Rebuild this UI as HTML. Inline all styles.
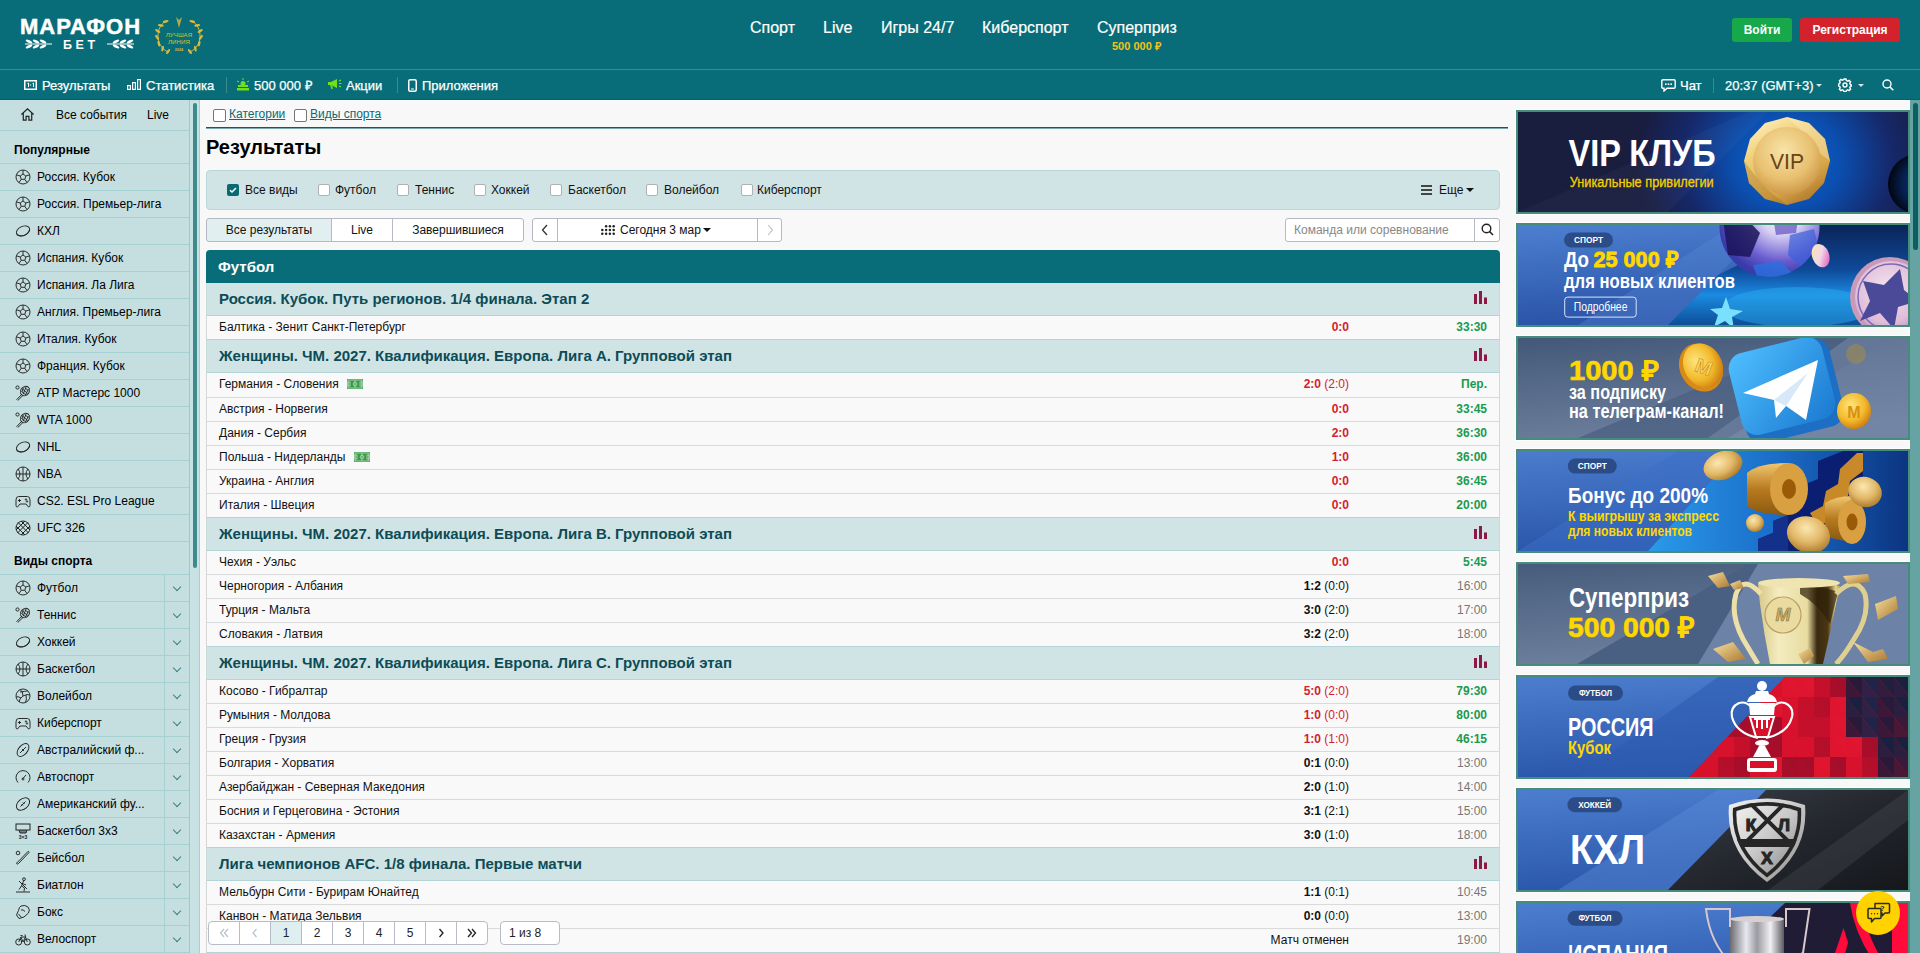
<!DOCTYPE html>
<html><head><meta charset="utf-8">
<style>
*{box-sizing:border-box}
html,body{margin:0;padding:0;width:1920px;height:953px;overflow:hidden;background:#f8f8f8;font-family:"Liberation Sans",sans-serif;font-size:12px;color:#000}
.abs{position:absolute}
#hdr{position:absolute;left:0;top:0;width:1920px;height:100px;background:#086d78}
#hdr .line{position:absolute;left:0;top:69px;width:1920px;height:1px;background:#3b8a8f}
.nav{position:absolute;top:19px;font-size:16px;color:#fff;line-height:18px;white-space:nowrap;-webkit-text-stroke:0.2px #fff}
.sub{position:absolute;top:78px;font-size:13px;color:#fff;line-height:15px;white-space:nowrap;-webkit-text-stroke:0.25px #fff}
.btn{position:absolute;top:18px;height:24px;border-radius:3px;color:#fff;font-weight:bold;font-size:12px;line-height:24px;text-align:center}
#side{position:absolute;left:0;top:100px;width:190px;height:853px;background:#c5dfe0;border-right:1px solid #9ccacc}
#sscroll{position:absolute;left:190px;top:100px;width:10px;height:853px;background:#c8e1e2;border-right:1px solid #a6d1d3}
#sscroll div{position:absolute;left:3px;top:3px;width:4px;height:465px;border-radius:3px;background:#3e8a8c}
.srow{position:absolute;left:0;width:189px;height:27px;border-bottom:1px solid #a6d1d3;white-space:nowrap}
.srow span{position:absolute;left:37px;top:6px;line-height:14px}
.srow svg{position:absolute;left:15px;top:5px}
.shead{position:absolute;left:0;width:189px;height:33px;border-bottom:1px solid #a6d1d3;font-weight:bold}
.shead span{position:absolute;left:14px;top:12px;line-height:14px}
.chev{position:absolute;left:164px;top:0;width:25px;height:26px;border-left:1px solid #a6d1d3}
.chev:after{content:"";position:absolute;left:9px;top:9px;width:5px;height:5px;border-right:1px solid #3c7f86;border-bottom:1px solid #3c7f86;transform:rotate(45deg)}
#main{position:absolute;left:200px;top:100px;width:1308px;height:853px;background:#f8f8f8}
#right{position:absolute;left:1508px;top:100px;width:402px;height:853px;background:#f8f8f8}
#rscroll{position:absolute;left:1910px;top:100px;width:10px;height:853px;background:#66a3a3}
#rscroll div{position:absolute;left:3px;top:3px;width:5px;height:147px;border-radius:3px;background:#0b5e62}

.cb{position:absolute;width:13px;height:13px;border:1px solid #767676;border-radius:2px;background:#fff}
.cbs{position:absolute;width:12px;height:12px;border:1px solid #b0b0b0;border-radius:2px;background:#fff}
.lnk{position:absolute;top:7px;color:#0b6a74;text-decoration:underline;line-height:14px;white-space:nowrap}
.ftxt{position:absolute;top:183px;line-height:14px;white-space:nowrap;color:#111}
.tab{position:absolute;top:118px;height:24px;line-height:22px;text-align:center;border:1px solid #b5b9c4;background:#fff;color:#111}
.cat{position:absolute;left:6px;width:1294px;height:33px;background:#d0e4e5;border-bottom:1px solid #b3d5d7;border-left:1px solid #c8dcdc;border-right:1px solid #c8dcdc}
.cat span{position:absolute;left:12px;top:7px;font-size:15px;font-weight:bold;color:#0d4c56;line-height:17px;white-space:nowrap}
.cat i{position:absolute;left:1267px;top:8px;width:13px;height:13px}
.row{position:absolute;left:6px;width:1294px;height:24px;background:#f9f9f9;border-bottom:1px solid #dadada;border-left:1px solid #d6d6d6;border-right:1px solid #d6d6d6;white-space:nowrap}
.row .n{position:absolute;left:12px;top:4px;line-height:14px;color:#111}
.row .s{position:absolute;right:150px;top:4px;line-height:14px;color:#111}
.row .t{position:absolute;right:12px;top:4px;line-height:14px;color:#777}
.row .s b{font-weight:bold}
.row .s.red{color:#d1232e}
.row .t.g{color:#1a9a4e;font-weight:bold}
.pi{position:absolute;left:1440px}
.pg{position:absolute;top:821px;height:24px;width:32px;border:1px solid #b7bcc8;background:#fff;text-align:center;line-height:22px;color:#222;font-size:12px}
</style></head><body>
<div id="hdr"><div class="line"></div>
<div class="abs" style="left:20px;top:15px;font-size:22px;font-weight:bold;color:#fff;letter-spacing:1px;line-height:24px;-webkit-text-stroke:0.5px #fff">МАРАФОН</div>
<div class="abs" style="left:63px;top:38px;font-size:12.5px;font-weight:bold;color:#fff;letter-spacing:3.6px;line-height:14px">БЕТ</div>
<svg class="abs" style="left:24px;top:38px" width="30" height="12" viewBox="0 0 30 12"><path d="M1 6 H28" stroke="#fff" stroke-width="1" fill="none"/><g fill="#fff"><ellipse cx="5" cy="3.5" rx="3.5" ry="1.3" transform="rotate(25 5 3.5)"/><ellipse cx="5" cy="8.5" rx="3.5" ry="1.3" transform="rotate(-25 5 8.5)"/><ellipse cx="12" cy="3.5" rx="3.5" ry="1.3" transform="rotate(25 12 3.5)"/><ellipse cx="12" cy="8.5" rx="3.5" ry="1.3" transform="rotate(-25 12 8.5)"/><ellipse cx="19" cy="3.5" rx="3.5" ry="1.3" transform="rotate(25 19 3.5)"/><ellipse cx="19" cy="8.5" rx="3.5" ry="1.3" transform="rotate(-25 19 8.5)"/></g></svg>
<svg class="abs" style="left:105px;top:38px" width="30" height="12" viewBox="0 0 30 12"><path d="M2 6 H29" stroke="#fff" stroke-width="1" fill="none"/><g fill="#fff"><ellipse cx="25" cy="3.5" rx="3.5" ry="1.3" transform="rotate(-25 25 3.5)"/><ellipse cx="25" cy="8.5" rx="3.5" ry="1.3" transform="rotate(25 25 8.5)"/><ellipse cx="18" cy="3.5" rx="3.5" ry="1.3" transform="rotate(-25 18 3.5)"/><ellipse cx="18" cy="8.5" rx="3.5" ry="1.3" transform="rotate(25 18 8.5)"/><ellipse cx="11" cy="3.5" rx="3.5" ry="1.3" transform="rotate(-25 11 3.5)"/><ellipse cx="11" cy="8.5" rx="3.5" ry="1.3" transform="rotate(25 11 8.5)"/></g></svg>
<svg class="abs" style="left:154px;top:15px" width="50" height="40" viewBox="0 0 50 40">
<g fill="none" stroke="#d9bb3a" stroke-width="1"><path d="M12 6 C1 12 1 31 14 37"/><path d="M38 6 C49 12 49 31 36 37"/></g>
<g fill="#d9bb3a"><ellipse cx="11.7" cy="6.5" rx="3" ry="1.2" transform="rotate(-15 11.7 6.5)"/><ellipse cx="38.3" cy="6.5" rx="3" ry="1.2" transform="rotate(15 38.3 6.5)"/><ellipse cx="6.8" cy="10.4" rx="3" ry="1.2" transform="rotate(8 6.8 10.4)"/><ellipse cx="43.2" cy="10.4" rx="3" ry="1.2" transform="rotate(-8 43.2 10.4)"/><ellipse cx="3.8" cy="16.0" rx="3" ry="1.2" transform="rotate(32 3.8 16.0)"/><ellipse cx="46.2" cy="16.0" rx="3" ry="1.2" transform="rotate(-32 46.2 16.0)"/><ellipse cx="3.1" cy="22.4" rx="3" ry="1.2" transform="rotate(55 3.1 22.4)"/><ellipse cx="46.9" cy="22.4" rx="3" ry="1.2" transform="rotate(-55 46.9 22.4)"/><ellipse cx="4.8" cy="28.6" rx="3" ry="1.2" transform="rotate(78 4.8 28.6)"/><ellipse cx="45.2" cy="28.6" rx="3" ry="1.2" transform="rotate(-78 45.2 28.6)"/><ellipse cx="8.7" cy="33.6" rx="3" ry="1.2" transform="rotate(102 8.7 33.6)"/><ellipse cx="41.3" cy="33.6" rx="3" ry="1.2" transform="rotate(-102 41.3 33.6)"/><ellipse cx="14.1" cy="36.5" rx="3" ry="1.2" transform="rotate(125 14.1 36.5)"/><ellipse cx="35.9" cy="36.5" rx="3" ry="1.2" transform="rotate(-125 35.9 36.5)"/><path d="M25 13 L22 2 L25 5 L28 2 Z" opacity="0.8"/></g>
<text x="25" y="22" font-size="6.2" font-family="Liberation Sans" fill="#d9bb3a" text-anchor="middle">ЛУЧШАЯ</text>
<text x="25" y="28.5" font-size="6.2" font-family="Liberation Sans" fill="#d9bb3a" text-anchor="middle">ЛИНИЯ</text>
<text x="25" y="36" font-size="3.8" font-family="Liberation Sans" font-weight="bold" fill="#d9bb3a" text-anchor="middle">2024</text>
</svg>
<div class="nav" style="left:750px">Спорт</div>
<div class="nav" style="left:823px">Live</div>
<div class="nav" style="left:881px">Игры 24/7</div>
<div class="nav" style="left:982px">Киберспорт</div>
<div class="nav" style="left:1097px">Суперприз</div>
<div class="abs" style="left:1112px;top:40px;font-size:11px;font-weight:bold;color:#f2c21b;line-height:12px;white-space:nowrap">500 000 ₽</div>
<div class="btn" style="left:1732px;width:60px;background:#17a84b">Войти</div>
<div class="btn" style="left:1800px;width:100px;background:#d2222b">Регистрация</div>
<svg class="abs" style="left:24px;top:80px" width="13" height="10" viewBox="0 0 13 10"><rect x="0.75" y="0.75" width="11.5" height="8.5" fill="none" stroke="#fff" stroke-width="1.5"/><path d="M3.5 3.5 L4.5 3 V7 M7.2 5 H5.8 M8.5 3.5 L9.5 3 V7" stroke="#fff" stroke-width="1" fill="none"/></svg>
<div class="sub" style="left:42px">Результаты</div>
<svg class="abs" style="left:127px;top:79px" width="14" height="11" viewBox="0 0 14 11"><g fill="none" stroke="#fff" stroke-width="1.2"><rect x="0.6" y="6.6" width="2.8" height="3.8"/><rect x="5.6" y="3.6" width="2.8" height="6.8"/><rect x="10.6" y="0.6" width="2.8" height="9.8"/></g></svg>
<div class="sub" style="left:146px">Статистика</div>
<div class="abs" style="left:226px;top:77px;width:1px;height:16px;background:#3b8a8f"></div>
<svg class="abs" style="left:236px;top:78px" width="14" height="13" viewBox="0 0 14 13"><g fill="#6fe01a"><rect x="2" y="7" width="10" height="2"/><rect x="1" y="10" width="12" height="2.5"/><circle cx="7" cy="5.5" r="2.5"/><rect x="6.5" y="0" width="1" height="2"/><rect x="1" y="3" width="2" height="1" transform="rotate(30 2 3.5)"/><rect x="11" y="3" width="2" height="1" transform="rotate(-30 12 3.5)"/></g></svg>
<div class="sub" style="left:254px">500 000 ₽</div>
<svg class="abs" style="left:327px;top:78px" width="15" height="12" viewBox="0 0 15 12"><path d="M1 4 H4 L10 1 V10 L4 7 H1 Z M3 7 L4.5 11 H6 L5 7" fill="#6fe01a"/><path d="M12 3 L14 2 M12 5.5 H14.5 M12 8 L14 9" stroke="#6fe01a" stroke-width="1.2"/></svg>
<div class="sub" style="left:346px">Акции</div>
<div class="abs" style="left:397px;top:77px;width:1px;height:16px;background:#3b8a8f"></div>
<svg class="abs" style="left:408px;top:79px" width="9" height="13" viewBox="0 0 9 13"><rect x="0.75" y="0.75" width="7.5" height="11.5" rx="1.5" fill="none" stroke="#fff" stroke-width="1.5"/><rect x="3" y="9.5" width="3" height="1" fill="#fff"/></svg>
<div class="sub" style="left:422px">Приложения</div>
<svg class="abs" style="left:1661px;top:79px" width="15" height="13" viewBox="0 0 15 13"><path d="M2 0.8 H13 Q14.2 0.8 14.2 2 V8 Q14.2 9.2 13 9.2 H6 L3 12 V9.2 H2 Q0.8 9.2 0.8 8 V2 Q0.8 0.8 2 0.8 Z" fill="none" stroke="#fff" stroke-width="1.4"/><g fill="#fff"><rect x="4" y="4.4" width="1.6" height="1.6"/><rect x="6.7" y="4.4" width="1.6" height="1.6"/><rect x="9.4" y="4.4" width="1.6" height="1.6"/></g></svg>
<div class="sub" style="left:1680px">Чат</div>
<div class="abs" style="left:1713px;top:78px;width:1px;height:15px;background:#3b8a8f"></div>
<div class="sub" style="left:1725px">20:37 (GMT+3)</div>
<div class="abs" style="left:1816px;top:84px;width:0;height:0;border-left:3px solid transparent;border-right:3px solid transparent;border-top:3px solid #d5e6e8"></div>
<svg class="abs" style="left:1838px;top:78px" width="14" height="14" viewBox="0 0 14 14"><g fill="none" stroke="#fff" stroke-width="1.4"><circle cx="7" cy="7" r="2"/><path d="M6 1 H8 L8.4 2.6 L9.8 3.2 L11.2 2.4 L12.6 3.8 L11.8 5.2 L12.4 6.6 L13.6 7 V8 L12.4 8.4 L11.8 9.8 L12.6 11.2 L11.2 12.6 L9.8 11.8 L8.4 12.4 L8 13.6 H6 L5.6 12.4 L4.2 11.8 L2.8 12.6 L1.4 11.2 L2.2 9.8 L1.6 8.4 L0.4 8 V6 L1.6 5.6 L2.2 4.2 L1.4 2.8 L2.8 1.4 L4.2 2.2 L5.6 1.6 Z"/></g></svg>
<div class="abs" style="left:1858px;top:84px;width:0;height:0;border-left:3px solid transparent;border-right:3px solid transparent;border-top:3px solid #d5e6e8"></div>
<svg class="abs" style="left:1882px;top:79px" width="12" height="12" viewBox="0 0 12 12"><circle cx="5" cy="5" r="4" fill="none" stroke="#fff" stroke-width="1.4"/><path d="M8 8 L11.3 11.3" stroke="#fff" stroke-width="1.6"/></svg>
</div>
<svg width="0" height="0" style="position:absolute">
<defs>
<symbol id="i-ball" viewBox="0 0 16 16"><g fill="none" stroke="#222" stroke-width="0.95"><circle cx="8" cy="8" r="7"/><path d="M8 5 L10.8 7 L9.8 10.3 H6.2 L5.2 7 Z"/><path d="M8 5 V1.2 M10.8 7 L14.6 5.8 M9.8 10.3 L12 13.6 M6.2 10.3 L4 13.6 M5.2 7 L1.4 5.8"/></g></symbol>
<symbol id="i-puck" viewBox="0 0 16 16"><g fill="none" stroke="#222" stroke-width="0.95"><ellipse cx="8" cy="8" rx="7" ry="4.6" transform="rotate(-25 8 8)"/><path d="M2 10.5 Q3 13.5 8.5 12.6 Q13.6 11 14.4 7"/></g></symbol>
<symbol id="i-tennis" viewBox="0 0 16 16"><g fill="none" stroke="#222" stroke-width="0.95"><ellipse cx="10" cy="6" rx="4.2" ry="5" transform="rotate(40 10 6)"/><path d="M7 9 L1.5 14.8 M8.2 10.2 L2.7 15.6"/><path d="M7.5 4 L12.5 8.5 M9.5 2.2 L13.6 6 M6.6 6.5 L11 10.2 M8.5 2.5 L6.8 7 M11 2.2 L8.2 9 M13.4 4 L10.5 10"/><circle cx="2.5" cy="2.5" r="1.6"/></g></symbol>
<symbol id="i-bask" viewBox="0 0 16 16"><g fill="none" stroke="#222" stroke-width="0.95"><circle cx="8" cy="8" r="7"/><path d="M1 8 H15 M8 1 V15 M3 3 Q7 8 3 13 M13 3 Q9 8 13 13"/></g></symbol>
<symbol id="i-game" viewBox="0 0 16 16"><g fill="none" stroke="#222" stroke-width="0.95"><path d="M3.5 3.5 H12.5 Q15 3.5 15 7 V12.5 Q15 14 13.5 14 L11 11 H5 L2.5 14 Q1 14 1 12.5 V7 Q1 3.5 3.5 3.5 Z"/><path d="M4.5 6 V9 M3 7.5 H6"/><circle cx="11" cy="6.5" r="0.7"/><circle cx="12" cy="8.5" r="0.7"/></g></symbol>
<symbol id="i-ufc" viewBox="0 0 16 16"><g fill="none" stroke="#222" stroke-width="1"><circle cx="8" cy="8" r="7"/><path d="M3 2.5 L13.5 13 M1 6 L10 15 M6 1 L15 10 M13 2.5 L2.5 13 M15 6 L6 15 M10 1 L1 10"/></g></symbol>
<symbol id="i-volley" viewBox="0 0 16 16"><g fill="none" stroke="#222" stroke-width="0.95"><circle cx="8" cy="8" r="7"/><path d="M8 8 Q8 3 5 1.6 M8 8 Q12.5 5.5 14.8 7 M8 8 Q4 11 4.2 14 M5 4 Q10 3.5 12.6 2.8 M11 7 Q12 11 10.5 14.5 M6 10 Q2.5 8 1.2 9"/></g></symbol>
<symbol id="i-aus" viewBox="0 0 16 16"><g fill="none" stroke="#222" stroke-width="0.95"><ellipse cx="8" cy="8" rx="7.5" ry="4.5" transform="rotate(-50 8 8)"/><path d="M5 11 L11 5 M7 7 L9 9"/></g></symbol>
<symbol id="i-auto" viewBox="0 0 16 16"><g fill="none" stroke="#222" stroke-width="0.95"><path d="M3 13.5 A7 7 0 1 1 13 13.5"/><path d="M8 9.5 L11 6"/><circle cx="8" cy="10" r="1"/></g></symbol>
<symbol id="i-amf" viewBox="0 0 16 16"><g fill="none" stroke="#222" stroke-width="0.95"><ellipse cx="8" cy="8" rx="7.5" ry="5" transform="rotate(-40 8 8)"/><path d="M5.5 10.5 L10.5 5.5 M6.5 8 L8 9.5 M8 6.5 L9.5 8"/></g></symbol>
<symbol id="i-b3" viewBox="0 0 16 16"><g fill="none" stroke="#222" stroke-width="1"><rect x="1" y="1" width="14" height="6"/><path d="M4 7 L5 10 H11 L12 7 M6 7 V10 M8 7 V10 M10 7 V10"/></g><text x="8" y="15.5" font-size="5" font-family="Liberation Sans" font-weight="bold" fill="#222" text-anchor="middle">3×3</text></symbol>
<symbol id="i-base" viewBox="0 0 16 16"><g fill="none" stroke="#222" stroke-width="0.95"><path d="M14 2.5 L5 12 L3.5 13.5 Q2.5 14.5 1.8 13.8 Q1.2 13 2.3 12.2 L4 10.8 L12.8 1.6 Q14 1 14 2.5 Z"/><circle cx="3" cy="3" r="1.8"/></g></symbol>
<symbol id="i-biat" viewBox="0 0 16 16"><g fill="none" stroke="#222" stroke-width="0.95"><circle cx="9" cy="2.2" r="1.4"/><path d="M8.5 4 L6.5 9 L9.5 11 L9 14.5 M7.5 6.5 L11 8 M6.5 9 L4 12.5 M1 15 H15 M4 4 L12 12"/></g></symbol>
<symbol id="i-box" viewBox="0 0 16 16"><g fill="none" stroke="#222" stroke-width="0.95"><path d="M6 2 Q10 0.5 13 3 Q15.5 6 13.5 9 L9 13 L4 14.5 L1.5 11 L3.5 6.5 Q4 3 6 2 Z"/><path d="M3.5 10 L6.5 13.5 M6 6 Q8 5 10 7.5"/></g></symbol>
<symbol id="i-bike" viewBox="0 0 16 16"><g fill="none" stroke="#222" stroke-width="0.95"><circle cx="3.7" cy="11" r="3"/><circle cx="12.3" cy="11" r="3"/><path d="M3.7 11 L6 6 H10.5 L12.3 11 M6 6 L8 11 L10.5 6 M5.5 4.5 H7.5 M10 3.5 L10.5 6"/></g></symbol>
<symbol id="i-home" viewBox="0 0 16 16"><g fill="none" stroke="#222" stroke-width="1.3"><path d="M1.5 8 L8 2 L14.5 8 M3.5 6.5 V14 H6.5 V10 H9.5 V14 H12.5 V6.5"/></g></symbol>
</defs></svg>
<div id="side"><div class="srow" style="top:0;height:31px"><svg style="left:20px;top:7px" width="15" height="15"><use href="#i-home"/></svg><span style="left:56px;top:8px">Все события</span><span style="left:147px;top:8px">Live</span></div>
<div class="shead" style="top:31px"><span>Популярные</span></div>
<div class="srow" style="top:64px"><svg width="16" height="16"><use href="#i-ball"/></svg><span>Россия. Кубок</span></div>
<div class="srow" style="top:91px"><svg width="16" height="16"><use href="#i-ball"/></svg><span>Россия. Премьер-лига</span></div>
<div class="srow" style="top:118px"><svg width="16" height="16"><use href="#i-puck"/></svg><span>КХЛ</span></div>
<div class="srow" style="top:145px"><svg width="16" height="16"><use href="#i-ball"/></svg><span>Испания. Кубок</span></div>
<div class="srow" style="top:172px"><svg width="16" height="16"><use href="#i-ball"/></svg><span>Испания. Ла Лига</span></div>
<div class="srow" style="top:199px"><svg width="16" height="16"><use href="#i-ball"/></svg><span>Англия. Премьер-лига</span></div>
<div class="srow" style="top:226px"><svg width="16" height="16"><use href="#i-ball"/></svg><span>Италия. Кубок</span></div>
<div class="srow" style="top:253px"><svg width="16" height="16"><use href="#i-ball"/></svg><span>Франция. Кубок</span></div>
<div class="srow" style="top:280px"><svg width="16" height="16"><use href="#i-tennis"/></svg><span>ATP Мастерс 1000</span></div>
<div class="srow" style="top:307px"><svg width="16" height="16"><use href="#i-tennis"/></svg><span>WTA 1000</span></div>
<div class="srow" style="top:334px"><svg width="16" height="16"><use href="#i-puck"/></svg><span>NHL</span></div>
<div class="srow" style="top:361px"><svg width="16" height="16"><use href="#i-bask"/></svg><span>NBA</span></div>
<div class="srow" style="top:388px"><svg width="16" height="16"><use href="#i-game"/></svg><span>CS2. ESL Pro League</span></div>
<div class="srow" style="top:415px"><svg width="16" height="16"><use href="#i-ufc"/></svg><span>UFC 326</span></div>
<div class="shead" style="top:442px"><span>Виды спорта</span></div>
<div class="srow" style="top:475px"><svg width="16" height="16"><use href="#i-ball"/></svg><span>Футбол</span><div class="chev"></div></div>
<div class="srow" style="top:502px"><svg width="16" height="16"><use href="#i-tennis"/></svg><span>Теннис</span><div class="chev"></div></div>
<div class="srow" style="top:529px"><svg width="16" height="16"><use href="#i-puck"/></svg><span>Хоккей</span><div class="chev"></div></div>
<div class="srow" style="top:556px"><svg width="16" height="16"><use href="#i-bask"/></svg><span>Баскетбол</span><div class="chev"></div></div>
<div class="srow" style="top:583px"><svg width="16" height="16"><use href="#i-volley"/></svg><span>Волейбол</span><div class="chev"></div></div>
<div class="srow" style="top:610px"><svg width="16" height="16"><use href="#i-game"/></svg><span>Киберспорт</span><div class="chev"></div></div>
<div class="srow" style="top:637px"><svg width="16" height="16"><use href="#i-aus"/></svg><span>Австралийский ф...</span><div class="chev"></div></div>
<div class="srow" style="top:664px"><svg width="16" height="16"><use href="#i-auto"/></svg><span>Автоспорт</span><div class="chev"></div></div>
<div class="srow" style="top:691px"><svg width="16" height="16"><use href="#i-amf"/></svg><span>Американский фу...</span><div class="chev"></div></div>
<div class="srow" style="top:718px"><svg width="16" height="16"><use href="#i-b3"/></svg><span>Баскетбол 3х3</span><div class="chev"></div></div>
<div class="srow" style="top:745px"><svg width="16" height="16"><use href="#i-base"/></svg><span>Бейсбол</span><div class="chev"></div></div>
<div class="srow" style="top:772px"><svg width="16" height="16"><use href="#i-biat"/></svg><span>Биатлон</span><div class="chev"></div></div>
<div class="srow" style="top:799px"><svg width="16" height="16"><use href="#i-box"/></svg><span>Бокс</span><div class="chev"></div></div>
<div class="srow" style="top:826px"><svg width="16" height="16"><use href="#i-bike"/></svg><span>Велоспорт</span><div class="chev"></div></div></div>
<div id="sscroll"><div></div></div>
<div id="main"><div class="cb" style="left:13px;top:9px"></div><div class="lnk" style="left:29px">Категории</div>
<div class="cb" style="left:94px;top:9px"></div><div class="lnk" style="left:110px">Виды спорта</div>
<div class="abs" style="left:6px;top:27px;width:1302px;height:1px;background:#0a5e66"></div><div class="abs" style="left:6px;top:28px;width:1302px;height:1px;background:#7aa8ad"></div>
<div class="abs" style="left:6px;top:36px;font-size:20px;font-weight:bold;line-height:23px;color:#000">Результаты</div>
<div class="abs" style="left:6px;top:70px;width:1294px;height:40px;background:#d0e4e5;border:1px solid #b9d6d8;border-radius:4px"></div>
<div class="abs" style="left:27px;top:84px;width:12px;height:12px;background:#0a6a72;border-radius:2px"><svg width="12" height="12" viewBox="0 0 12 12" style="position:absolute;left:0;top:0"><path d="M3 6.2 L5 8 L9 4" fill="none" stroke="#fff" stroke-width="1.5"/></svg></div>
<div class="abs" style="left:45px;top:83px;line-height:14px;color:#111;white-space:nowrap">Все виды</div>
<div class="cbs" style="left:118px;top:84px"></div>
<div class="abs" style="left:135px;top:83px;line-height:14px;color:#111;white-space:nowrap">Футбол</div>
<div class="cbs" style="left:197px;top:84px"></div>
<div class="abs" style="left:215px;top:83px;line-height:14px;color:#111;white-space:nowrap">Теннис</div>
<div class="cbs" style="left:274px;top:84px"></div>
<div class="abs" style="left:291px;top:83px;line-height:14px;color:#111;white-space:nowrap">Хоккей</div>
<div class="cbs" style="left:350px;top:84px"></div>
<div class="abs" style="left:368px;top:83px;line-height:14px;color:#111;white-space:nowrap">Баскетбол</div>
<div class="cbs" style="left:446px;top:84px"></div>
<div class="abs" style="left:464px;top:83px;line-height:14px;color:#111;white-space:nowrap">Волейбол</div>
<div class="cbs" style="left:541px;top:84px"></div>
<div class="abs" style="left:557px;top:83px;line-height:14px;color:#111;white-space:nowrap">Киберспорт</div>
<svg class="abs" style="left:1221px;top:85px" width="12" height="10" viewBox="0 0 12 10"><g fill="#444"><rect x="0" y="0" width="11" height="2"/><rect x="0" y="4" width="11" height="2"/><rect x="0" y="8" width="11" height="2"/></g></svg>
<div class="abs" style="left:1239px;top:83px;line-height:14px;color:#111">Еще</div>
<div class="abs" style="left:1266px;top:88px;width:0;height:0;border-left:4px solid transparent;border-right:4px solid transparent;border-top:4px solid #111"></div>
<div class="tab" style="left:6px;width:126px;background:#e1eff0;border-radius:3px 0 0 3px">Все результаты</div>
<div class="tab" style="left:131px;width:62px;border-left:1px solid #b5b9c4">Live</div>
<div class="tab" style="left:192px;width:132px;border-radius:0 3px 3px 0">Завершившиеся</div>
<div class="tab" style="left:332px;width:26px;border-radius:3px 0 0 3px"><svg width="8" height="12" viewBox="0 0 8 12" style="margin-top:5px"><path d="M6 1 L1.5 6 L6 11" fill="none" stroke="#333" stroke-width="1.3"/></svg></div><div class="tab" style="left:557px;width:25px;border-radius:0 3px 3px 0"><svg width="8" height="12" viewBox="0 0 8 12" style="margin-top:5px"><path d="M2 1 L6.5 6 L2 11" fill="none" stroke="#bbb" stroke-width="1.1"/></svg></div><div class="tab" style="left:357px;width:201px"><svg width="15" height="10" viewBox="0 0 15 10" style="position:absolute;left:43px;top:6px"><g fill="#222"><circle cx="5.1" cy="1.3" r="1.25"/><circle cx="8.9" cy="1.3" r="1.25"/><circle cx="12.7" cy="1.3" r="1.25"/><circle cx="1.3" cy="5.0" r="1.25"/><circle cx="5.1" cy="5.0" r="1.25"/><circle cx="8.9" cy="5.0" r="1.25"/><circle cx="12.7" cy="5.0" r="1.25"/><circle cx="1.3" cy="8.7" r="1.25"/><circle cx="5.1" cy="8.7" r="1.25"/><circle cx="8.9" cy="8.7" r="1.25"/><circle cx="12.7" cy="8.7" r="1.25"/></g></svg><span style="position:absolute;left:62px;top:0">Сегодня 3 мар</span><span style="position:absolute;left:145px;top:9px;width:0;height:0;border-left:4px solid transparent;border-right:4px solid transparent;border-top:4px solid #111"></span></div>
<div class="tab" style="left:1085px;width:190px;border-radius:3px 0 0 3px;text-align:left;padding-left:8px;color:#888">Команда или соревнование</div>
<div class="tab" style="left:1274px;width:26px;border-radius:0 3px 3px 0"><svg width="13" height="13" viewBox="0 0 13 13" style="margin-top:4px"><circle cx="5.5" cy="5.5" r="4.3" fill="none" stroke="#222" stroke-width="1.4"/><path d="M8.5 8.5 L12 12" stroke="#222" stroke-width="1.6"/></svg></div>
<div class="abs" style="left:6px;top:150px;width:1294px;height:33px;background:#086d78;border-radius:4px 4px 0 0"><span style="position:absolute;left:12px;top:8px;font-size:15px;font-weight:bold;color:#fff;line-height:17px">Футбол</span></div>
<div class="cat" style="top:183px"><span>Россия. Кубок. Путь регионов. 1/4 финала. Этап 2</span><i><svg width="13" height="13" viewBox="0 0 13 13"><g fill="#8c1a45"><rect x="0" y="3" width="3" height="10"/><rect x="5" y="0" width="3" height="13"/><rect x="10" y="6.5" width="3" height="6.5"/></g></svg></i></div>
<div class="row" style="top:216px;border-bottom-color:#b3d5d7"><span class="n">Балтика - Зенит Санкт-Петербург</span><span class="s red"><b>0:0</b></span><span class="t g">33:30</span></div>
<div class="cat" style="top:240px"><span>Женщины. ЧМ. 2027. Квалификация. Европа. Лига А. Групповой этап</span><i><svg width="13" height="13" viewBox="0 0 13 13"><g fill="#8c1a45"><rect x="0" y="3" width="3" height="10"/><rect x="5" y="0" width="3" height="13"/><rect x="10" y="6.5" width="3" height="6.5"/></g></svg></i></div>
<div class="row" style="top:273px;height:25px"><span class="n">Германия - Словения</span><span style="position:absolute;left:140px;top:5px"><svg width="16" height="10" viewBox="0 0 16 10" style="position:absolute;top:1px"><rect width="16" height="10" fill="#3c9a4c"/><g fill="none" stroke="#b9e0b9" stroke-width="0.8"><rect x="1" y="1" width="14" height="8"/><path d="M8 1 V9"/><circle cx="8" cy="5" r="1.8"/><rect x="1" y="3" width="2" height="4"/><rect x="13" y="3" width="2" height="4"/></g></svg></span><span class="s red"><b>2:0</b> (2:0)</span><span class="t g">Пер.</span></div>
<div class="row" style="top:298px"><span class="n">Австрия - Норвегия</span><span class="s red"><b>0:0</b></span><span class="t g">33:45</span></div>
<div class="row" style="top:322px"><span class="n">Дания - Сербия</span><span class="s red"><b>2:0</b></span><span class="t g">36:30</span></div>
<div class="row" style="top:346px"><span class="n">Польша - Нидерланды</span><span style="position:absolute;left:147px;top:5px"><svg width="16" height="10" viewBox="0 0 16 10" style="position:absolute;top:1px"><rect width="16" height="10" fill="#3c9a4c"/><g fill="none" stroke="#b9e0b9" stroke-width="0.8"><rect x="1" y="1" width="14" height="8"/><path d="M8 1 V9"/><circle cx="8" cy="5" r="1.8"/><rect x="1" y="3" width="2" height="4"/><rect x="13" y="3" width="2" height="4"/></g></svg></span><span class="s red"><b>1:0</b></span><span class="t g">36:00</span></div>
<div class="row" style="top:370px"><span class="n">Украина - Англия</span><span class="s red"><b>0:0</b></span><span class="t g">36:45</span></div>
<div class="row" style="top:394px;border-bottom-color:#b3d5d7"><span class="n">Италия - Швеция</span><span class="s red"><b>0:0</b></span><span class="t g">20:00</span></div>
<div class="cat" style="top:418px"><span>Женщины. ЧМ. 2027. Квалификация. Европа. Лига B. Групповой этап</span><i><svg width="13" height="13" viewBox="0 0 13 13"><g fill="#8c1a45"><rect x="0" y="3" width="3" height="10"/><rect x="5" y="0" width="3" height="13"/><rect x="10" y="6.5" width="3" height="6.5"/></g></svg></i></div>
<div class="row" style="top:451px"><span class="n">Чехия - Уэльс</span><span class="s red"><b>0:0</b></span><span class="t g">5:45</span></div>
<div class="row" style="top:475px"><span class="n">Черногория - Албания</span><span class="s"><b>1:2</b> (0:0)</span><span class="t">16:00</span></div>
<div class="row" style="top:499px"><span class="n">Турция - Мальта</span><span class="s"><b>3:0</b> (2:0)</span><span class="t">17:00</span></div>
<div class="row" style="top:523px;border-bottom-color:#b3d5d7"><span class="n">Словакия - Латвия</span><span class="s"><b>3:2</b> (2:0)</span><span class="t">18:00</span></div>
<div class="cat" style="top:547px"><span>Женщины. ЧМ. 2027. Квалификация. Европа. Лига C. Групповой этап</span><i><svg width="13" height="13" viewBox="0 0 13 13"><g fill="#8c1a45"><rect x="0" y="3" width="3" height="10"/><rect x="5" y="0" width="3" height="13"/><rect x="10" y="6.5" width="3" height="6.5"/></g></svg></i></div>
<div class="row" style="top:580px"><span class="n">Косово - Гибралтар</span><span class="s red"><b>5:0</b> (2:0)</span><span class="t g">79:30</span></div>
<div class="row" style="top:604px"><span class="n">Румыния - Молдова</span><span class="s red"><b>1:0</b> (0:0)</span><span class="t g">80:00</span></div>
<div class="row" style="top:628px"><span class="n">Греция - Грузия</span><span class="s red"><b>1:0</b> (1:0)</span><span class="t g">46:15</span></div>
<div class="row" style="top:652px"><span class="n">Болгария - Хорватия</span><span class="s"><b>0:1</b> (0:0)</span><span class="t">13:00</span></div>
<div class="row" style="top:676px"><span class="n">Азербайджан - Северная Македония</span><span class="s"><b>2:0</b> (1:0)</span><span class="t">14:00</span></div>
<div class="row" style="top:700px"><span class="n">Босния и Герцеговина - Эстония</span><span class="s"><b>3:1</b> (2:1)</span><span class="t">15:00</span></div>
<div class="row" style="top:724px;border-bottom-color:#b3d5d7"><span class="n">Казахстан - Армения</span><span class="s"><b>3:0</b> (1:0)</span><span class="t">18:00</span></div>
<div class="cat" style="top:748px"><span>Лига чемпионов AFC. 1/8 финала. Первые матчи</span><i><svg width="13" height="13" viewBox="0 0 13 13"><g fill="#8c1a45"><rect x="0" y="3" width="3" height="10"/><rect x="5" y="0" width="3" height="13"/><rect x="10" y="6.5" width="3" height="6.5"/></g></svg></i></div>
<div class="row" style="top:781px"><span class="n">Мельбурн Сити - Бурирам Юнайтед</span><span class="s"><b>1:1</b> (0:1)</span><span class="t">10:45</span></div>
<div class="row" style="top:805px"><span class="n">Канвон - Матида Зельвия</span><span class="s"><b>0:0</b> (0:0)</span><span class="t">13:00</span></div>
<div class="row" style="top:829px;border-bottom-color:#b3d5d7"><span class="n"></span><span class="s">Матч отменен</span><span class="t">19:00</span></div>
<div class="pg" style="left:8px;width:32px;border-radius:4px 0 0 4px;background:#fff;color:#bbb"><svg width="12" height="12" viewBox="0 0 12 12" style="margin-top:5px"><path d="M6 2 L2.5 6 L6 10 M10 2 L6.5 6 L10 10" fill="none" stroke="#b8c4d0" stroke-width="1.3"/></svg></div>
<div class="pg" style="left:39px;width:32px;background:#fff;color:#bbb"><svg width="12" height="12" viewBox="0 0 12 12" style="margin-top:5px"><path d="M7.5 2 L4 6 L7.5 10" fill="none" stroke="#b8c4d0" stroke-width="1.3"/></svg></div>
<div class="pg" style="left:70px;width:32px;background:#dfeeef;color:#222">1</div>
<div class="pg" style="left:101px;width:32px;background:#fff;color:#222">2</div>
<div class="pg" style="left:132px;width:32px;background:#fff;color:#222">3</div>
<div class="pg" style="left:163px;width:32px;background:#fff;color:#222">4</div>
<div class="pg" style="left:194px;width:32px;background:#fff;color:#222">5</div>
<div class="pg" style="left:225px;width:32px;background:#fff;color:#222"><svg width="12" height="12" viewBox="0 0 12 12" style="margin-top:5px"><path d="M4.5 2 L8 6 L4.5 10" fill="none" stroke="#222" stroke-width="1.3"/></svg></div>
<div class="pg" style="left:256px;width:32px;border-radius:0 4px 4px 0;background:#fff;color:#222"><svg width="12" height="12" viewBox="0 0 12 12" style="margin-top:5px"><path d="M2 2 L5.5 6 L2 10 M6 2 L9.5 6 L6 10" fill="none" stroke="#222" stroke-width="1.3"/></svg></div>
<div class="pg" style="left:300px;width:60px;border-radius:4px;text-align:left;padding-left:8px">1 из 8</div></div>
<div id="right"></div>
<div class="abs" style="left:0;top:99px;width:1920px;height:1px;background:#03606c"></div><div class="abs" style="left:200px;top:100px;width:1710px;height:1px;background:#fff"></div>
<div class="abs" style="left:1516px;top:110px;width:394px;height:104px;border:2px solid #458c7a;overflow:hidden;background:#222;box-shadow:0 0 0 1px #fff"><svg width="390" height="100" viewBox="0 0 390 100" style="position:absolute;left:0;top:0"><defs><radialGradient id="g1" cx="269" cy="49" r="150" gradientUnits="userSpaceOnUse" gradientTransform="translate(269 49) scale(1 0.9) translate(-269 -49)"><stop offset="0" stop-color="#0a66d6"/><stop offset="0.35" stop-color="#0b4fb0"/><stop offset="0.7" stop-color="#16286a"/><stop offset="1" stop-color="#191d3e"/></radialGradient>
<linearGradient id="gold1" x1="0" y1="0" x2="0.3" y2="1"><stop offset="0" stop-color="#f6e2a6"/><stop offset="0.45" stop-color="#e5bf6c"/><stop offset="1" stop-color="#b9843a"/></linearGradient>
<radialGradient id="ball1" cx="0.6" cy="0.5" r="0.6"><stop offset="0" stop-color="#0a3c9a"/><stop offset="0.6" stop-color="#06204f"/><stop offset="1" stop-color="#02050f"/></radialGradient></defs>
<rect width="390" height="100" fill="#181d3d"/><rect width="390" height="100" fill="url(#g1)"/>
<polygon points="0,100 150,100 250,0 230,0" fill="#ffffff" opacity="0.03"/>
<text x="50.5" y="53.7" font-size="37" font-family="Liberation Sans" font-weight="bold" fill="#fff" textLength="147" lengthAdjust="spacingAndGlyphs">VIP КЛУБ</text>
<text x="51.7" y="74.8" font-size="14" font-family="Liberation Sans" fill="#f5d000" stroke="#f5d000" stroke-width="0.3" textLength="144" lengthAdjust="spacingAndGlyphs">Уникальные привилегии</text>
<defs><linearGradient id="gold1b" x1="0.2" y1="0" x2="0.8" y2="1"><stop offset="0" stop-color="#fff0c0"/><stop offset="0.3" stop-color="#f0cf78"/><stop offset="0.7" stop-color="#d9a848"/><stop offset="1" stop-color="#a87028"/></linearGradient>
<radialGradient id="gold1c" cx="0.45" cy="0.35" r="0.7"><stop offset="0" stop-color="#f8e4a8"/><stop offset="0.6" stop-color="#e8c070"/><stop offset="1" stop-color="#c89040"/></radialGradient></defs>
<polygon points="269,5 291,11 307,27 312,49 306,71 291,87 269,93 247,87 231,71 226,49 232,27 247,11" fill="url(#gold1b)"/>
<polygon points="269,5 291,11 307,27 312,49 300,40 285,20" fill="#fff4d0" opacity="0.35"/>
<polygon points="226,49 231,71 247,87 269,93 250,78 236,62" fill="#8a5a18" opacity="0.25"/>
<circle cx="269" cy="49" r="34" fill="url(#gold1c)"/>
<text x="269" y="57" font-size="22" font-family="Liberation Sans" fill="#6a4414" text-anchor="middle" textLength="34" lengthAdjust="spacingAndGlyphs">VIP</text>
<circle cx="400" cy="72" r="30" fill="url(#ball1)"/></svg></div>
<div class="abs" style="left:1516px;top:223px;width:394px;height:104px;border:2px solid #458c7a;overflow:hidden;background:#222;box-shadow:0 0 0 1px #fff"><svg width="390" height="100" viewBox="0 0 390 100" style="position:absolute;left:0;top:0"><defs><linearGradient id="bg2" x1="0" y1="0" x2="0.25" y2="1"><stop offset="0" stop-color="#4d7fd0"/><stop offset="1" stop-color="#2852a6"/></linearGradient>
<radialGradient id="sb2" cx="0.4" cy="0.35" r="0.7"><stop offset="0" stop-color="#f0f0ff"/><stop offset="0.45" stop-color="#8a86d8"/><stop offset="1" stop-color="#2a3a9a"/></radialGradient>
<radialGradient id="pc2" cx="0.4" cy="0.4" r="0.7"><stop offset="0" stop-color="#f4d8f0"/><stop offset="0.6" stop-color="#c9a0d8"/><stop offset="1" stop-color="#8a6ab8"/></radialGradient>
<radialGradient id="st2" cx="0.5" cy="1" r="0.6"><stop offset="0" stop-color="#9fe8ff" stop-opacity="0.9"/><stop offset="1" stop-color="#2a5ab0" stop-opacity="0"/></radialGradient></defs>
<rect width="390" height="100" fill="url(#bg2)"/>
<defs><linearGradient id="dk2" x1="0" y1="0" x2="0" y2="1"><stop offset="0" stop-color="#0a2458"/><stop offset="0.45" stop-color="#0f4a9a"/><stop offset="0.7" stop-color="#1b8ae0"/><stop offset="1" stop-color="#0d4e9a"/></linearGradient>
<radialGradient id="ball2" cx="0.62" cy="0.35" r="0.65"><stop offset="0" stop-color="#ffffff"/><stop offset="0.35" stop-color="#d8d0f4"/><stop offset="0.75" stop-color="#6a5ed0"/><stop offset="1" stop-color="#3a3aa8"/></radialGradient>
<radialGradient id="coin2" cx="0.45" cy="0.4" r="0.65"><stop offset="0" stop-color="#f6e4f0"/><stop offset="0.7" stop-color="#e0bcd8"/><stop offset="1" stop-color="#b890c8"/></radialGradient>
<linearGradient id="sm2" x1="0" y1="0" x2="1" y2="1"><stop offset="0" stop-color="#ffe8a0"/><stop offset="0.5" stop-color="#f0d8e8"/><stop offset="1" stop-color="#e040b0"/></linearGradient></defs>
<clipPath id="cb2"><circle cx="251.5" cy="2" r="50"/></clipPath>
<polygon points="150,100 390,100 390,0 300,0 200,50" fill="url(#dk2)"/>
<polygon points="60,100 150,100 250,0 215,0" fill="#5a8ad8" opacity="0.35"/>
<ellipse cx="280" cy="82" rx="75" ry="20" fill="#2ab0f0" opacity="0.45"/>
<circle cx="251.5" cy="2" r="50" fill="url(#ball2)"/>
<g clip-path="url(#cb2)">
<path d="M205 -5 L225 -10 L242 8 L232 32 L210 30 Z" fill="#1a1458" opacity="0.85"/>
<path d="M235 40 L262 36 L278 52 L262 58 L240 55 Z" fill="#2a70e0" opacity="0.8"/>
<path d="M272 10 L296 4 L302 28 L285 44 L270 30 Z" fill="#3a60d8" opacity="0.7"/>
<path d="M255 -8 L280 -6 L278 8 L258 10 Z" fill="#4a3ab8" opacity="0.6"/>
</g>
<ellipse cx="302.6" cy="30.6" rx="8.5" ry="12" transform="rotate(-20 302.6 30.6)" fill="url(#sm2)"/>
<circle cx="372" cy="72" r="40" fill="#c89ab8"/>
<circle cx="373" cy="72" r="36" fill="url(#coin2)"/>
<circle cx="373" cy="72" r="33" fill="none" stroke="#7a6ab8" stroke-width="1.5"/>
<polygon points="345,56 366,60 382,44 386,65 400,76 380,82 376,104 362,88 342,96 352,76" fill="#4a4a98"/>
<polygon points="208,72 212,84 225,86 214,92 216,104 207,96 196,102 200,90 192,84 204,83" fill="#7ae0ff"/>
<rect x="46" y="7.5" width="49" height="15" rx="7.5" fill="#2b4c86"/><text x="70.5" y="18.1" font-size="9.5" font-family="Liberation Sans" font-weight="bold" fill="#fff" text-anchor="middle" textLength="29" lengthAdjust="spacingAndGlyphs">СПОРТ</text>
<text x="46" y="42.2" font-size="22" font-family="Liberation Sans" font-weight="bold" fill="#fff" textLength="25" lengthAdjust="spacingAndGlyphs">До</text>
<text x="75.5" y="42.2" font-size="22" font-family="Liberation Sans" font-weight="bold" fill="#ffd800" stroke="#ffd800" stroke-width="0.8" textLength="85" lengthAdjust="spacingAndGlyphs">25 000 ₽</text>
<text x="46" y="63" font-size="20" font-family="Liberation Sans" font-weight="bold" fill="#fff" textLength="171" lengthAdjust="spacingAndGlyphs">для новых клиентов</text>
<rect x="46.7" y="72.1" width="71.5" height="20" rx="3" fill="none" stroke="#d8e4f8" stroke-width="1"/>
<text x="55.7" y="85.6" font-size="12" font-family="Liberation Sans" fill="#fff" textLength="53.7" lengthAdjust="spacingAndGlyphs">Подробнее</text></svg></div>
<div class="abs" style="left:1516px;top:336px;width:394px;height:104px;border:2px solid #458c7a;overflow:hidden;background:#222;box-shadow:0 0 0 1px #fff"><svg width="390" height="100" viewBox="0 0 390 100" style="position:absolute;left:0;top:0"><defs><linearGradient id="bg3" x1="0" y1="0" x2="0.3" y2="1"><stop offset="0" stop-color="#435878"/><stop offset="1" stop-color="#6c7e9c"/></linearGradient>
<radialGradient id="coin" cx="0.4" cy="0.35" r="0.7"><stop offset="0" stop-color="#ffe680"/><stop offset="0.6" stop-color="#f2b92a"/><stop offset="1" stop-color="#c9780f"/></radialGradient>
<linearGradient id="tg" x1="0" y1="0" x2="1" y2="1"><stop offset="0" stop-color="#4fc0ff"/><stop offset="1" stop-color="#1a78d0"/></linearGradient></defs>
<rect width="390" height="100" fill="url(#bg3)"/>
<polygon points="60,100 210,100 390,-10 300,0" fill="#4c6282" opacity="0.8"/>
<polygon points="190,100 390,100 390,-10 330,0" fill="#7a8cab" opacity="0.5"/>
<text x="51" y="41.6" font-size="27" font-family="Liberation Sans" font-weight="bold" fill="#ffd700" stroke="#ffd700" stroke-width="0.6" textLength="90" lengthAdjust="spacingAndGlyphs">1000 ₽</text>
<text x="51" y="60.7" font-size="20" font-family="Liberation Sans" font-weight="bold" fill="#fff" textLength="97" lengthAdjust="spacingAndGlyphs">за подписку</text>
<text x="51" y="79.7" font-size="20" font-family="Liberation Sans" font-weight="bold" fill="#fff" textLength="155" lengthAdjust="spacingAndGlyphs">на телеграм-канал!</text>
<ellipse cx="183" cy="29.5" rx="21" ry="25" transform="rotate(-30 183 29.5)" fill="#d88a15"/>
<ellipse cx="185" cy="27.5" rx="19" ry="23" transform="rotate(-30 185 27.5)" fill="url(#coin)"/>
<text x="186" y="36" font-size="20" font-family="Liberation Sans" font-weight="bold" fill="#f8d860" stroke="#c98a18" stroke-width="0.6" text-anchor="middle" transform="rotate(20 186 28)">M</text>
<rect x="220" y="8" width="100" height="90" rx="16" transform="rotate(-14 270 53)" fill="#1c6fc4"/>
<rect x="216" y="6" width="96" height="84" rx="16" transform="rotate(-14 264 48)" fill="url(#tg)"/>
<path d="M225 55 L300 22 L288 82 L268 68 L258 80 L256 62 Z" fill="#fff"/>
<path d="M256 62 L290 35 L268 68 Z" fill="#d8e8f8"/>
<circle cx="338" cy="16" r="10" fill="#a08a50" opacity="0.6"/>
<ellipse cx="336" cy="73" rx="17" ry="18" fill="url(#coin)"/>
<text x="336" y="80" font-size="16" font-family="Liberation Sans" font-weight="bold" fill="#d8900f" text-anchor="middle">M</text></svg></div>
<div class="abs" style="left:1516px;top:449px;width:394px;height:104px;border:2px solid #458c7a;overflow:hidden;background:#222;box-shadow:0 0 0 1px #fff"><svg width="390" height="100" viewBox="0 0 390 100" style="position:absolute;left:0;top:0"><defs><linearGradient id="bg4" x1="0" y1="0" x2="0.25" y2="1"><stop offset="0" stop-color="#4b7ccd"/><stop offset="1" stop-color="#2a55a8"/></linearGradient>
<linearGradient id="gd4" x1="0" y1="0" x2="1" y2="1"><stop offset="0" stop-color="#ffe9a0"/><stop offset="0.4" stop-color="#e0a83a"/><stop offset="1" stop-color="#8c5a14"/></linearGradient></defs>
<rect width="390" height="100" fill="url(#bg4)"/>
<defs><linearGradient id="r4" x1="0" y1="0" x2="1" y2="0"><stop offset="0" stop-color="#2a9ae8"/><stop offset="0.5" stop-color="#1a6cc8"/><stop offset="1" stop-color="#0c3480"/></linearGradient>
<linearGradient id="cyl4" x1="0" y1="0" x2="0" y2="1"><stop offset="0" stop-color="#f0c870"/><stop offset="0.5" stop-color="#b87a20"/><stop offset="1" stop-color="#8a5a10"/></linearGradient>
<radialGradient id="cn4" cx="0.4" cy="0.35" r="0.7"><stop offset="0" stop-color="#fbe8b0"/><stop offset="0.55" stop-color="#e2b868"/><stop offset="1" stop-color="#a87828"/></radialGradient></defs>
<polygon points="130,100 390,100 390,0 220,0" fill="url(#r4)"/>
<polygon points="0,100 130,100 220,0 160,0" fill="#3a70c8" opacity="0.5"/>
<path d="M240 100 L240 88 L255 82 L255 70 L270 64 L270 52 L285 46 L285 34 L300 28 L300 10 L325 0 L345 0 L345 40 L300 100 Z" fill="#0a1f72"/>
<path d="M240 88 L255 82 L255 100 L240 100 Z M255 70 L270 64 L270 100 L255 100 Z" fill="#13308a"/>
<path d="M339 2 L345 2 L345 20 L332 30 L330 45 L318 52 L316 68 L300 75 L292 62 L305 55 L308 40 L320 33 L322 18 Z" fill="#c88a28"/>
<path d="M229 22 Q240 12 271 12 L271 64 Q240 64 229 55 Z" fill="url(#cyl4)"/>
<ellipse cx="271" cy="38" rx="19" ry="26" fill="#d8a040"/>
<ellipse cx="271" cy="38" rx="7" ry="10" fill="#9a5a08"/>
<path d="M307 52 Q318 45 334 45 L334 90 Q318 90 307 84 Z" fill="url(#cyl4)"/>
<ellipse cx="334" cy="71" rx="14" ry="22" fill="#d8a040"/>
<ellipse cx="334" cy="71" rx="5.5" ry="8.5" fill="#9a5a08"/>
<ellipse cx="205" cy="14.5" rx="20" ry="14" transform="rotate(-20 205 14.5)" fill="url(#cn4)"/>
<circle cx="237" cy="72" r="9" fill="url(#cn4)"/>
<ellipse cx="290.5" cy="83.7" rx="22" ry="18" transform="rotate(20 290.5 83.7)" fill="url(#cn4)"/>
<ellipse cx="347" cy="41" rx="17" ry="15" transform="rotate(20 347 41)" fill="url(#cn4)"/>
<rect x="49.8" y="7.6" width="49" height="15" rx="7.5" fill="#2b4c86"/><text x="74.3" y="18.2" font-size="9.5" font-family="Liberation Sans" font-weight="bold" fill="#fff" text-anchor="middle" textLength="29" lengthAdjust="spacingAndGlyphs">СПОРТ</text>
<text x="50" y="51.5" font-size="22" font-family="Liberation Sans" font-weight="bold" fill="#fff" textLength="140" lengthAdjust="spacingAndGlyphs">Бонус до 200%</text>
<text x="50" y="70.4" font-size="15" font-family="Liberation Sans" font-weight="bold" fill="#ffd800" textLength="151" lengthAdjust="spacingAndGlyphs">К выигрышу за экспресс</text>
<text x="50" y="84.6" font-size="15" font-family="Liberation Sans" font-weight="bold" fill="#ffd800" textLength="124" lengthAdjust="spacingAndGlyphs">для новых клиентов</text>
</svg></div>
<div class="abs" style="left:1516px;top:562px;width:394px;height:104px;border:2px solid #458c7a;overflow:hidden;background:#222;box-shadow:0 0 0 1px #fff"><svg width="390" height="100" viewBox="0 0 390 100" style="position:absolute;left:0;top:0"><defs><linearGradient id="bg5" x1="0" y1="0" x2="0.3" y2="1"><stop offset="0" stop-color="#475c7c"/><stop offset="1" stop-color="#6e809e"/></linearGradient>
<linearGradient id="cup5" x1="0" y1="0" x2="1" y2="0"><stop offset="0" stop-color="#8a6a2a"/><stop offset="0.3" stop-color="#f4e0a0"/><stop offset="0.55" stop-color="#c8a050"/><stop offset="0.8" stop-color="#f8e8b0"/><stop offset="1" stop-color="#6a4a18"/></linearGradient></defs>
<rect width="390" height="100" fill="url(#bg5)"/>
<polygon points="59,100 390,100 390,0 230,0" fill="#4a6082"/>
<polygon points="180,100 390,100 390,0 240,0" fill="#6c82a6"/>
<text x="51" y="42.7" font-size="27" font-family="Liberation Sans" font-weight="bold" fill="#fff" textLength="120" lengthAdjust="spacingAndGlyphs">Суперприз</text>
<text x="50" y="72.7" font-size="28" font-family="Liberation Sans" font-weight="bold" fill="#ffd700" stroke="#ffd700" stroke-width="0.7" textLength="126" lengthAdjust="spacingAndGlyphs">500 000 ₽</text>
<defs><linearGradient id="cup5b" x1="0" y1="0" x2="1" y2="0"><stop offset="0" stop-color="#d8c888"/><stop offset="0.25" stop-color="#f4ecc0"/><stop offset="0.6" stop-color="#e8dca0"/><stop offset="0.72" stop-color="#3a2a10"/><stop offset="0.85" stop-color="#4a3612"/><stop offset="0.95" stop-color="#e8d890"/><stop offset="1" stop-color="#b89840"/></linearGradient>
<linearGradient id="rib5" x1="0" y1="0" x2="1" y2="1"><stop offset="0" stop-color="#f8e0a0"/><stop offset="1" stop-color="#a87830"/></linearGradient></defs>
<path d="M240 20 Q280 12 322 22 L318 40 Q312 70 305 100 H252 Q246 70 242 40 Z" fill="url(#cup5b)"/>
<ellipse cx="281" cy="19" rx="41" ry="5" fill="#f0e4b0"/>
<path d="M282 24 Q305 22 320 28 L312 60 Q300 40 282 30 Z" fill="#2e2008" opacity="0.7"/>
<path d="M243 30 Q225 10 218 30 Q212 50 225 75 Q235 92 240 100" fill="none" stroke="#ece0a8" stroke-width="5"/>
<path d="M318 30 Q338 10 347 30 Q352 52 336 75 Q326 92 318 100" fill="none" stroke="#e0d090" stroke-width="5"/>
<circle cx="265" cy="51" r="18" fill="#eadca0" stroke="#b8a060" stroke-width="1.2"/>
<text x="265" y="57" font-size="18" font-family="Liberation Sans" font-weight="bold" font-style="italic" fill="#c8b070" stroke="#8a7438" stroke-width="0.6" text-anchor="middle">M</text>
<g fill="url(#rib5)"><path d="M190 12 L205 8 L212 22 L200 24 Z"/><path d="M212 20 L222 16 L226 24 L216 26 Z"/><path d="M325 12 L350 10 L352 18 L330 20 Z"/><path d="M357 40 L378 32 L380 45 L360 56 Z"/><path d="M195 85 L215 78 L228 95 L210 98 Z"/><path d="M335 78 L355 88 L365 85 L370 95 L350 98 Z"/><path d="M280 90 L292 84 L296 92 L286 100 Z"/></g></svg></div>
<div class="abs" style="left:1516px;top:675px;width:394px;height:104px;border:2px solid #458c7a;overflow:hidden;background:#222;box-shadow:0 0 0 1px #fff"><svg width="390" height="100" viewBox="0 0 390 100" style="position:absolute;left:0;top:0"><defs><linearGradient id="bg6" x1="0" y1="0" x2="0.25" y2="1"><stop offset="0" stop-color="#4c7ecf"/><stop offset="1" stop-color="#2a56aa"/></linearGradient><clipPath id="cl6"><polygon points="171,100 390,100 390,0 267,0"/></clipPath></defs>
<rect width="390" height="100" fill="url(#bg6)"/>
<polygon points="60,100 171,100 267,0 200,0" fill="#2d5cb0" opacity="0.6"/>
<g clip-path="url(#cl6)"><rect x="160" y="0" width="230" height="100" fill="#d5112b"/><polygon points="200,0 216,0 216,20" fill="#d8122c"/><polygon points="200,0 200,20 216,20" fill="#d8122c" opacity="0.9"/><polygon points="200,20 216,20 216,40" fill="#a30e2a"/><polygon points="200,20 200,40 216,40" fill="#a30e2a" opacity="0.9"/><polygon points="200,40 216,40 216,60" fill="#a30e2a"/><polygon points="200,40 200,60 216,60" fill="#a30e2a" opacity="0.9"/><polygon points="200,60 216,60 216,80" fill="#d8122c"/><polygon points="200,60 200,80 216,80" fill="#d8122c" opacity="0.9"/><polygon points="200,80 216,80 216,100" fill="#b30f2a"/><polygon points="200,80 200,100 216,100" fill="#b30f2a" opacity="0.9"/><polygon points="216,0 232,0 232,20" fill="#a30e2a"/><polygon points="216,0 216,20 232,20" fill="#a30e2a" opacity="0.9"/><polygon points="216,20 232,20 232,40" fill="#e01530"/><polygon points="216,20 216,40 232,40" fill="#e01530" opacity="0.9"/><polygon points="216,40 232,40 232,60" fill="#a30e2a"/><polygon points="216,40 216,60 232,60" fill="#a30e2a" opacity="0.9"/><polygon points="216,60 232,60 232,80" fill="#c4102a"/><polygon points="216,60 216,80 232,80" fill="#c4102a" opacity="0.9"/><polygon points="216,80 232,80 232,100" fill="#a30e2a"/><polygon points="216,80 216,100 232,100" fill="#a30e2a" opacity="0.9"/><polygon points="232,0 248,0 248,20" fill="#c4102a"/><polygon points="232,0 232,20 248,20" fill="#c4102a" opacity="0.9"/><polygon points="232,20 248,20 248,40" fill="#e01530"/><polygon points="232,20 232,40 248,40" fill="#e01530" opacity="0.9"/><polygon points="232,40 248,40 248,60" fill="#b30f2a"/><polygon points="232,40 232,60 248,60" fill="#b30f2a" opacity="0.9"/><polygon points="232,60 248,60 248,80" fill="#a30e2a"/><polygon points="232,60 232,80 248,80" fill="#a30e2a" opacity="0.9"/><polygon points="232,80 248,80 248,100" fill="#d8122c"/><polygon points="232,80 232,100 248,100" fill="#d8122c" opacity="0.9"/><polygon points="248,0 264,0 264,20" fill="#d8122c"/><polygon points="248,0 248,20 264,20" fill="#d8122c" opacity="0.9"/><polygon points="248,20 264,20 264,40" fill="#e01530"/><polygon points="248,20 248,40 264,40" fill="#e01530" opacity="0.9"/><polygon points="248,40 264,40 264,60" fill="#a30e2a"/><polygon points="248,40 248,60 264,60" fill="#a30e2a" opacity="0.9"/><polygon points="248,60 264,60 264,80" fill="#a30e2a"/><polygon points="248,60 248,80 264,80" fill="#a30e2a" opacity="0.9"/><polygon points="248,80 264,80 264,100" fill="#e01530"/><polygon points="248,80 248,100 264,100" fill="#e01530" opacity="0.9"/><polygon points="264,0 280,0 280,20" fill="#e01530"/><polygon points="264,0 264,20 280,20" fill="#e01530" opacity="0.9"/><polygon points="264,20 280,20 280,40" fill="#d8122c"/><polygon points="264,20 264,40 280,40" fill="#d8122c" opacity="0.9"/><polygon points="264,40 280,40 280,60" fill="#d8122c"/><polygon points="264,40 264,60 280,60" fill="#d8122c" opacity="0.9"/><polygon points="264,60 280,60 280,80" fill="#d8122c"/><polygon points="264,60 264,80 280,80" fill="#d8122c" opacity="0.9"/><polygon points="264,80 280,80 280,100" fill="#a30e2a"/><polygon points="264,80 264,100 280,100" fill="#a30e2a" opacity="0.9"/><polygon points="280,0 296,0 296,20" fill="#e01530"/><polygon points="280,0 280,20 296,20" fill="#e01530" opacity="0.9"/><polygon points="280,20 296,20 296,40" fill="#c4102a"/><polygon points="280,20 280,40 296,40" fill="#c4102a" opacity="0.9"/><polygon points="280,40 296,40 296,60" fill="#c4102a"/><polygon points="280,40 280,60 296,60" fill="#c4102a" opacity="0.9"/><polygon points="280,60 296,60 296,80" fill="#d8122c"/><polygon points="280,60 280,80 296,80" fill="#d8122c" opacity="0.9"/><polygon points="280,80 296,80 296,100" fill="#a30e2a"/><polygon points="280,80 280,100 296,100" fill="#a30e2a" opacity="0.9"/><polygon points="296,0 312,0 312,20" fill="#c4102a"/><polygon points="296,0 296,20 312,20" fill="#c4102a" opacity="0.9"/><polygon points="296,20 312,20 312,40" fill="#b30f2a"/><polygon points="296,20 296,40 312,40" fill="#b30f2a" opacity="0.9"/><polygon points="296,40 312,40 312,60" fill="#c4102a"/><polygon points="296,40 296,60 312,60" fill="#c4102a" opacity="0.9"/><polygon points="296,60 312,60 312,80" fill="#b30f2a"/><polygon points="296,60 296,80 312,80" fill="#b30f2a" opacity="0.9"/><polygon points="296,80 312,80 312,100" fill="#e01530"/><polygon points="296,80 296,100 312,100" fill="#e01530" opacity="0.9"/><polygon points="312,0 328,0 328,20" fill="#a30e2a"/><polygon points="312,0 312,20 328,20" fill="#a30e2a" opacity="0.9"/><polygon points="312,20 328,20 328,40" fill="#e01530"/><polygon points="312,20 312,40 328,40" fill="#e01530" opacity="0.9"/><polygon points="312,40 328,40 328,60" fill="#e01530"/><polygon points="312,40 312,60 328,60" fill="#e01530" opacity="0.9"/><polygon points="312,60 328,60 328,80" fill="#e01530"/><polygon points="312,60 312,80 328,80" fill="#e01530" opacity="0.9"/><polygon points="312,80 328,80 328,100" fill="#a30e2a"/><polygon points="312,80 312,100 328,100" fill="#a30e2a" opacity="0.9"/><polygon points="328,0 344,0 344,20" fill="#2a1a3a"/><polygon points="328,0 328,20 344,20" fill="#2a1a3a" opacity="0.9"/><polygon points="328,20 344,20 344,40" fill="#1a2040"/><polygon points="328,20 328,40 344,40" fill="#1a2040" opacity="0.9"/><polygon points="328,40 344,40 344,60" fill="#2a1a3a"/><polygon points="328,40 328,60 344,60" fill="#2a1a3a" opacity="0.9"/><polygon points="328,60 344,60 344,80" fill="#e01530"/><polygon points="328,60 328,80 344,80" fill="#e01530" opacity="0.9"/><polygon points="328,80 344,80 344,100" fill="#d8122c"/><polygon points="328,80 328,100 344,100" fill="#d8122c" opacity="0.9"/><polygon points="344,0 360,0 360,20" fill="#202448"/><polygon points="344,0 344,20 360,20" fill="#202448" opacity="0.9"/><polygon points="344,20 360,20 360,40" fill="#202448"/><polygon points="344,20 344,40 360,40" fill="#202448" opacity="0.9"/><polygon points="344,40 360,40 360,60" fill="#202448"/><polygon points="344,40 344,60 360,60" fill="#202448" opacity="0.9"/><polygon points="344,60 360,60 360,80" fill="#a30e2a"/><polygon points="344,60 344,80 360,80" fill="#a30e2a" opacity="0.9"/><polygon points="344,80 360,80 360,100" fill="#b30f2a"/><polygon points="344,80 344,100 360,100" fill="#b30f2a" opacity="0.9"/><polygon points="360,0 376,0 376,20" fill="#20203e"/><polygon points="360,0 360,20 376,20" fill="#20203e" opacity="0.9"/><polygon points="360,20 376,20 376,40" fill="#2a1a3a"/><polygon points="360,20 360,40 376,40" fill="#2a1a3a" opacity="0.9"/><polygon points="360,40 376,40 376,60" fill="#2a1a3a"/><polygon points="360,40 360,60 376,60" fill="#2a1a3a" opacity="0.9"/><polygon points="360,60 376,60 376,80" fill="#1a2040"/><polygon points="360,60 360,80 376,80" fill="#1a2040" opacity="0.9"/><polygon points="360,80 376,80 376,100" fill="#2a1a3a"/><polygon points="360,80 360,100 376,100" fill="#2a1a3a" opacity="0.9"/><polygon points="376,0 392,0 392,20" fill="#1a2040"/><polygon points="376,0 376,20 392,20" fill="#1a2040" opacity="0.9"/><polygon points="376,20 392,20 392,40" fill="#1a2040"/><polygon points="376,20 376,40 392,40" fill="#1a2040" opacity="0.9"/><polygon points="376,40 392,40 392,60" fill="#3a1a38"/><polygon points="376,40 376,60 392,60" fill="#3a1a38" opacity="0.9"/><polygon points="376,60 392,60 392,80" fill="#1a2040"/><polygon points="376,60 376,80 392,80" fill="#1a2040" opacity="0.9"/><polygon points="376,80 392,80 392,100" fill="#3a1a38"/><polygon points="376,80 376,100 392,100" fill="#3a1a38" opacity="0.9"/></g>
<rect x="50" y="8.5" width="55" height="15" rx="7.5" fill="#2b4c86"/><text x="77.5" y="19.1" font-size="9.5" font-family="Liberation Sans" font-weight="bold" fill="#fff" text-anchor="middle" textLength="33" lengthAdjust="spacingAndGlyphs">ФУТБОЛ</text>
<text x="50" y="59.2" font-size="25" font-family="Liberation Sans" font-weight="bold" fill="#fff" textLength="85.6" lengthAdjust="spacingAndGlyphs">РОССИЯ</text>
<text x="50" y="77" font-size="18" font-family="Liberation Sans" font-weight="bold" fill="#ffd800" textLength="43" lengthAdjust="spacingAndGlyphs">Кубок</text>
<g fill="#fff"><circle cx="244" cy="9" r="5"/><path d="M238 14 H250 L251 17 Q258 19 259 25 H229 Q230 19 237 17 Z"/>
<path d="M231 26 H257 L256 38 H232 Z"/></g>
<path d="M232 40 H256 L250 60 H238 Z" fill="#d8102a" stroke="#fff" stroke-width="2"/>
<g fill="#fff"><rect x="236" y="40" width="16" height="3"/><rect x="238" y="43" width="2" height="8"/><rect x="243" y="43" width="2" height="9"/><rect x="248" y="43" width="2" height="8"/></g>
<g fill="none" stroke="#fff" stroke-width="2.2"><path d="M233 30 Q228 24 221 26 Q212 30 214 40 Q218 56 240 61"/><path d="M255 30 Q260 24 267 26 Q276 30 274 40 Q270 56 248 61"/></g>
<g fill="#fff"><ellipse cx="244" cy="66" rx="7" ry="3"/><path d="M241 69 H247 L253 80 H235 Z"/><rect x="229" y="81" width="30" height="14" rx="3"/></g>
<rect x="232" y="84" width="24" height="7" fill="#d8102a"/></svg></div>
<div class="abs" style="left:1516px;top:788px;width:394px;height:104px;border:2px solid #458c7a;overflow:hidden;background:#222;box-shadow:0 0 0 1px #fff"><svg width="390" height="100" viewBox="0 0 390 100" style="position:absolute;left:0;top:0"><defs><linearGradient id="bg7" x1="0" y1="0" x2="0.25" y2="1"><stop offset="0" stop-color="#4c7ecf"/><stop offset="1" stop-color="#2a56aa"/></linearGradient>
<linearGradient id="dk7" x1="0" y1="0" x2="1" y2="1"><stop offset="0" stop-color="#3a3e46"/><stop offset="0.5" stop-color="#24272e"/><stop offset="1" stop-color="#15171c"/></linearGradient>
<linearGradient id="sh7" x1="0" y1="0" x2="0" y2="1"><stop offset="0" stop-color="#e8e8e8"/><stop offset="1" stop-color="#9a9a9a"/></linearGradient></defs>
<rect width="390" height="100" fill="url(#bg7)"/>
<polygon points="40,100 150,100 248,0 200,0" fill="#5a8ad8" opacity="0.45"/>
<polygon points="150,100 390,100 390,0 248,0" fill="url(#dk7)"/>
<polygon points="250,100 300,100 390,30 390,0" fill="#4a4e56" opacity="0.35"/>
<rect x="49.4" y="7.3" width="54.6" height="15" rx="7.5" fill="#2b4c86"/><text x="76.7" y="17.9" font-size="9.5" font-family="Liberation Sans" font-weight="bold" fill="#fff" text-anchor="middle" textLength="33" lengthAdjust="spacingAndGlyphs">ХОККЕЙ</text>
<text x="52" y="73.6" font-size="43" font-family="Liberation Sans" font-weight="bold" fill="#fff" textLength="75" lengthAdjust="spacingAndGlyphs">КХЛ</text>
<defs><linearGradient id="sv7" x1="0" y1="0" x2="1" y2="1"><stop offset="0" stop-color="#f0f0f0"/><stop offset="0.5" stop-color="#c8c8c8"/><stop offset="1" stop-color="#8a8a8a"/></linearGradient></defs>
<path d="M211 15 Q249 2 287 15 Q291 62 249 92 Q207 62 211 15 Z" fill="url(#sv7)"/>
<path d="M215 18 Q249 6 283 18 Q286 60 249 87.5 Q212 60 215 18 Z" fill="#262626"/>
<path d="M218.5 21 Q249 10.5 279.5 21 Q281.5 57 249 83 Q216.5 57 218.5 21 Z" fill="url(#sv7)"/>
<clipPath id="cl7"><path d="M215 18 Q249 6 283 18 Q286 60 249 87.5 Q212 60 215 18 Z"/></clipPath><g clip-path="url(#cl7)"><rect x="214" y="49" width="70" height="8" fill="#262626"/>
<path d="M232 13 L276 57 M267 13 L223 57" stroke="#262626" stroke-width="4"/></g>
<path d="M245 57 L249 53 L253 57 Z" fill="#262626"/>
<text x="233" y="41" font-size="17" font-family="Liberation Sans" font-weight="bold" fill="#262626" stroke="#262626" stroke-width="1.2" text-anchor="middle">К</text>
<text x="266" y="41" font-size="17" font-family="Liberation Sans" font-weight="bold" fill="#262626" stroke="#262626" stroke-width="1.2" text-anchor="middle">Л</text>
<text x="249" y="74" font-size="17" font-family="Liberation Sans" font-weight="bold" fill="#262626" stroke="#262626" stroke-width="1.2" text-anchor="middle">Х</text></svg></div>
<div class="abs" style="left:1516px;top:901px;width:394px;height:104px;border:2px solid #458c7a;overflow:hidden;background:#222;box-shadow:0 0 0 1px #fff"><svg width="390" height="100" viewBox="0 0 390 100" style="position:absolute;left:0;top:0"><defs><linearGradient id="bg8" x1="0" y1="0" x2="0.25" y2="1"><stop offset="0" stop-color="#4c7ecf"/><stop offset="1" stop-color="#2a56aa"/></linearGradient>
<linearGradient id="sv8" x1="0" y1="0" x2="1" y2="0"><stop offset="0" stop-color="#6a6a70"/><stop offset="0.3" stop-color="#e8e8f0"/><stop offset="0.5" stop-color="#9a9aa0"/><stop offset="0.75" stop-color="#f0f0f4"/><stop offset="1" stop-color="#5a5a60"/></linearGradient></defs>
<rect width="390" height="100" fill="url(#bg8)"/>
<polygon points="160,100 390,100 390,0 267,0" fill="#201c36"/>
<path d="M300 100 L325.5 25 L330 39.5 L314 100 Z" fill="#ff0a3a"/><path d="M332 0 H344 Q347 30 366 60 L380 100 H366 L354 56 Q336 28 332 0 Z" fill="#ff0a3a"/><rect x="374" y="0" width="16" height="100" fill="#ff0a3a"/>
<rect x="49.5" y="7.7" width="55" height="15" rx="7.5" fill="#2b4c86"/><text x="77.0" y="18.3" font-size="9.5" font-family="Liberation Sans" font-weight="bold" fill="#fff" text-anchor="middle" textLength="33" lengthAdjust="spacingAndGlyphs">ФУТБОЛ</text>
<text x="50" y="60" font-size="26" font-family="Liberation Sans" font-weight="bold" fill="#fff" textLength="100" lengthAdjust="spacingAndGlyphs">ИСПАНИЯ</text>
<path d="M212 16 H266 V100 H212 Z" fill="url(#sv8)"/>
<ellipse cx="239" cy="16" rx="27" ry="3" fill="#d8d0d0"/>
<g fill="none" stroke="#d8c8cc" stroke-width="2"><path d="M213 60 Q192 40 188 6 H212 V24"/><path d="M266 60 L285 50 L291.5 6 H268 V24"/></g></svg></div>
<div class="abs" style="left:1856px;top:891px;width:44px;height:44px;border-radius:50%;background:#ffd200"><svg width="44" height="44" viewBox="0 0 44 44"><g fill="#ffd200" stroke="#2a2a2a" stroke-width="1.5" stroke-linejoin="round"><path d="M19 12.5 H32.5 Q33.5 12.5 33.5 13.5 V21 Q33.5 22 32.5 22 H29 L26 25 V22 H20 Q19 22 19 21 Z"/><path d="M12.5 17.5 H24 Q25 17.5 25 18.5 V26.5 Q25 27.5 24 27.5 H18.5 L15.5 31 V27.5 H13 Q12 27.5 12 26.5 V18.5 Q12 17.5 13 17.5 Z"/></g><text x="26.3" y="20" font-size="7.5" font-family="Liberation Sans" font-weight="bold" fill="#2a2a2a" text-anchor="middle">?</text><g fill="#2a2a2a"><circle cx="15.5" cy="22.8" r="0.7"/><circle cx="18.5" cy="22.8" r="0.7"/><circle cx="21.5" cy="22.8" r="0.7"/></g></svg></div>
<div id="rscroll"><div></div></div>
</body></html>
